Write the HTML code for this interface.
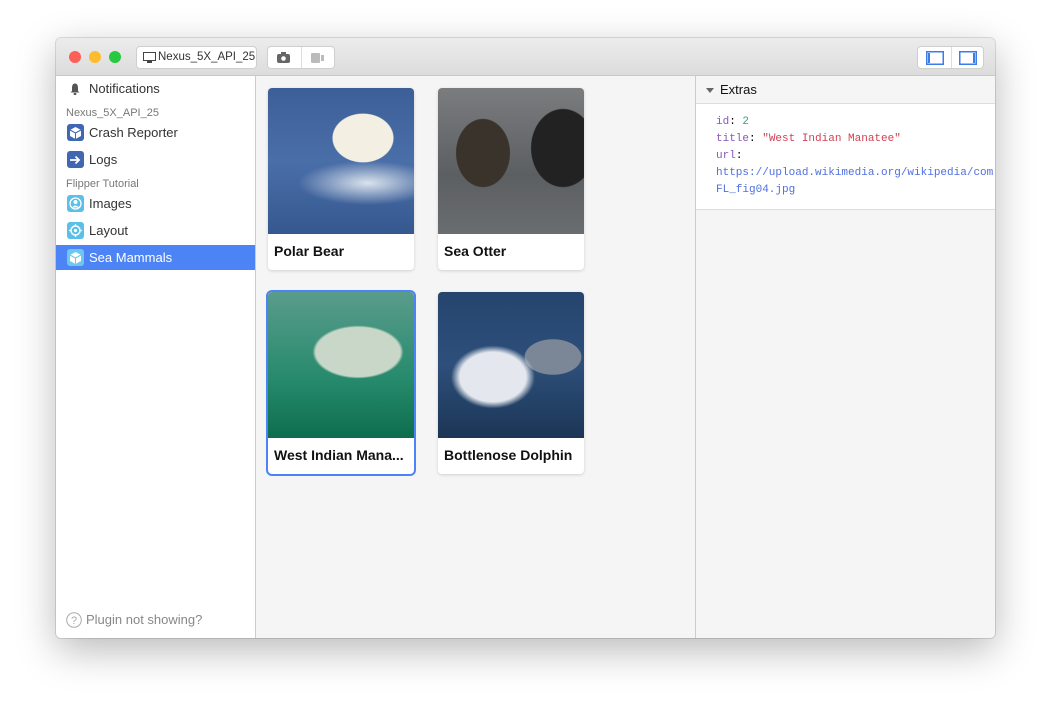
<!DOCTYPE html>
<html><head><style>
*{box-sizing:border-box;margin:0;padding:0}
body{width:1051px;height:712px;background:#fff;font-family:"Liberation Sans",sans-serif;position:relative;overflow:hidden}
.win{position:absolute;left:56px;top:38px;width:939px;height:600px;border-radius:5px;overflow:hidden;box-shadow:0 12px 40px rgba(0,0,0,.28),0 0 0 1px rgba(0,0,0,.12);background:#f5f5f5}
.tb{position:absolute;left:0;top:0;width:939px;height:38px;background:linear-gradient(#ececec,#dcdcdc);border-bottom:1px solid #c8c8c8}
.dot{position:absolute;top:13px;width:12px;height:12px;border-radius:50%}
.btn{position:absolute;top:8px;height:23px;background:#fff;border:1px solid #cfcfcf;border-radius:4px;font-size:11.5px;color:#333;line-height:21px;white-space:nowrap}
.side{position:absolute;left:0;top:38px;width:200px;height:562px;background:#fff;border-right:1px solid #ccc}
.it{position:absolute;left:0;width:199px;height:25px;font-size:13px;color:#333;line-height:25px;padding-left:33px}
.ic{position:absolute;left:11px;top:4px;width:17px;height:17px;border-radius:3px}
.hd{position:absolute;left:10px;font-size:11px;color:#777}
.card{position:absolute;width:146px;height:182px;background:#fff;border-radius:4px;box-shadow:0 1px 3px rgba(0,0,0,.15);overflow:hidden}
.card .img{position:absolute;left:0;top:0;width:146px;height:146px}
.card .lb{position:absolute;left:6px;top:155px;font-size:14px;font-weight:bold;color:#111}
.right{position:absolute;left:639px;top:38px;width:300px;height:562px;background:#f5f5f5;border-left:1px solid #ccc}
.mono{font-family:"Liberation Mono",monospace;font-size:11px;line-height:17px}
</style></head><body>
<div class="win">
<div class="tb">
<div class="dot" style="left:13px;background:#fc5f57"></div>
<div class="dot" style="left:33px;background:#fdbc2e"></div>
<div class="dot" style="left:53px;background:#28c840"></div>
<div class="btn" style="left:80px;width:121px;padding-left:21px">
<svg style="position:absolute;left:6px;top:5px" width="13" height="11"><rect x="0.5" y="0.5" width="12" height="8" fill="none" stroke="#444"/><rect x="4" y="9" width="5" height="2" fill="#444"/></svg>Nexus_5X_API_25</div>
<div class="btn" style="left:211px;width:68px">
<svg style="position:absolute;left:9px;top:5px" width="13" height="11"><rect x="0" y="2" width="13" height="9" rx="2" fill="#666"/><rect x="4" y="0" width="5" height="3" fill="#666"/><circle cx="6.5" cy="6.5" r="2.3" fill="#fff"/></svg>
<div style="position:absolute;left:33px;top:0;width:1px;height:21px;background:#ddd"></div>
<svg style="position:absolute;left:43px;top:6px" width="13" height="10"><rect x="0" y="0" width="9" height="10" rx="1" fill="#bbb"/><rect x="10" y="2" width="3" height="6" fill="#bbb"/></svg>
</div>
<div class="btn" style="left:861px;width:67px">
<svg style="position:absolute;left:8px;top:4px" width="18" height="14"><rect x="0.75" y="0.75" width="16.5" height="12.5" fill="none" stroke="#3b7ce8" stroke-width="1.5"/><rect x="2" y="2" width="2" height="10" fill="#3b7ce8"/></svg>
<div style="position:absolute;left:33px;top:0;width:1px;height:21px;background:#ddd"></div>
<svg style="position:absolute;left:41px;top:4px" width="18" height="14"><rect x="0.75" y="0.75" width="16.5" height="12.5" fill="none" stroke="#3b7ce8" stroke-width="1.5"/><rect x="14" y="2" width="2" height="10" fill="#3b7ce8"/></svg>
</div>
</div>
<div class="side">
<div class="it" style="top:0"><svg style="position:absolute;left:14px;top:7px" width="10" height="12"><path d="M5 0.5C2.5 0.5 2 3 2 5V8L0.5 9.5H9.5L8 8V5C8 3 7.5 0.5 5 0.5Z" fill="#555"/><rect x="3.5" y="10" width="3" height="2" rx="1" fill="#555"/></svg>Notifications</div>
<div class="hd" style="top:31px">Nexus_5X_API_25</div>
<div class="it" style="top:44px"><div class="ic" style="background:#4267b2"></div><svg style="position:absolute;left:14px;top:7px" width="11" height="12"><path d="M5.5 0L11 3V9L5.5 12L0 9V3Z" fill="#fff"/><path d="M0 3L5.5 6L11 3M5.5 6V12" stroke="#4267b2" fill="none"/></svg>Crash Reporter</div>
<div class="it" style="top:71px"><div class="ic" style="background:#4267b2"></div><svg style="position:absolute;left:14px;top:8px" width="11" height="10"><path d="M0 5H9M5.5 1.5L9 5L5.5 8.5" stroke="#fff" stroke-width="1.8" fill="none"/></svg>Logs</div>
<div class="hd" style="top:102px">Flipper Tutorial</div>
<div class="it" style="top:115px"><div class="ic" style="background:#5ac0ea"></div><svg style="position:absolute;left:13px;top:6px" width="13" height="13"><circle cx="6.5" cy="6.5" r="5.5" stroke="#fff" fill="none" stroke-width="1.3"/><circle cx="6.5" cy="5" r="2" fill="#fff"/><path d="M3 10.5Q6.5 6.5 10 10.5" fill="#fff"/></svg>Images</div>
<div class="it" style="top:142px"><div class="ic" style="background:#5ac0ea"></div><svg style="position:absolute;left:13px;top:6px" width="13" height="13"><circle cx="6.5" cy="6.5" r="4.5" stroke="#fff" fill="none" stroke-width="1.5"/><circle cx="6.5" cy="6.5" r="1.6" fill="#fff"/><path d="M6.5 0V2.5M6.5 10.5V13M0 6.5H2.5M10.5 6.5H13" stroke="#fff" stroke-width="1.3"/></svg>Layout</div>
<div class="it" style="top:169px;background:#4d84f5;color:#fff"><div class="ic" style="background:#6cc8ee"></div><svg style="position:absolute;left:14px;top:7px" width="11" height="12"><path d="M5.5 0L11 3V9L5.5 12L0 9V3Z" fill="#fff"/><path d="M0 3L5.5 6L11 3M5.5 6V12" stroke="#6cc8ee" fill="none"/></svg>Sea Mammals</div>
<div style="position:absolute;left:10px;top:536px;font-size:13px;color:#888;padding-left:20px;line-height:16px"><svg style="position:absolute;left:0;top:0" width="16" height="16"><circle cx="8" cy="8" r="7.3" stroke="#aaa" fill="none"/><text x="8" y="12" font-size="11" text-anchor="middle" fill="#aaa" font-family="Liberation Sans">?</text></svg>Plugin not showing?</div>
</div>
<div class="card" style="left:212px;top:50px"><div class="img" style="background:radial-gradient(ellipse 50px 40px at 95px 50px,#f3efe2 60%,transparent 62%),radial-gradient(ellipse 70px 22px at 100px 95px,rgba(235,240,245,.9),transparent),linear-gradient(#3d5f98,#4a6ea8 50%,#35588f)"></div><div class="lb">Polar Bear</div></div>
<div class="card" style="left:382px;top:50px"><div class="img" style="background:radial-gradient(ellipse 38px 48px at 45px 65px,#3a332c 70%,transparent 72%),radial-gradient(ellipse 45px 55px at 125px 60px,#222 70%,transparent 72%),linear-gradient(#7a7c7e,#5c5f62 60%,#6a6d70)"></div><div class="lb">Sea Otter</div></div>
<div class="card" style="left:212px;top:254px;box-shadow:0 0 0 2px #4d84f5"><div class="img" style="background:radial-gradient(ellipse 65px 38px at 90px 60px,#c9d7c8 65%,transparent 70%),linear-gradient(#5a9c8c,#268a6c 60%,#0d6e4e)"></div><div class="lb">West Indian Mana...</div></div>
<div class="card" style="left:382px;top:254px"><div class="img" style="background:radial-gradient(ellipse 60px 45px at 55px 85px,#e4e8ee 55%,transparent 70%),radial-gradient(ellipse 40px 25px at 115px 65px,#7b8696 70%,transparent 72%),linear-gradient(#25456e,#2d4f7a 50%,#1c3556)"></div><div class="lb">Bottlenose Dolphin</div></div>
<div class="right">
<div style="position:absolute;left:0;top:0;width:300px;height:28px;border-bottom:1px solid #ddd;font-size:13px;color:#111;line-height:28px;padding-left:24px"><svg style="position:absolute;left:10px;top:12px" width="8" height="5"><path d="M0 0H8L4 5Z" fill="#666"/></svg>Extras</div>
<div style="position:absolute;left:0;top:28px;width:300px;height:106px;background:#fff;border-bottom:1px solid #ddd"></div>
<div class="mono" style="position:absolute;left:20px;top:38px;white-space:nowrap">
<div><span style="color:#8b57b5">id</span>: <span style="color:#3a9a8a">2</span></div>
<div><span style="color:#8b57b5">title</span>: <span style="color:#d23f54">"West Indian Manatee"</span></div>
<div><span style="color:#8b57b5">url</span>:</div>
<div style="color:#4f6fe0">https://upload.wikimedia.org/wikipedia/com</div>
<div style="color:#4f6fe0">FL_fig04.jpg</div>
</div>
</div>
</div>
</body></html>
